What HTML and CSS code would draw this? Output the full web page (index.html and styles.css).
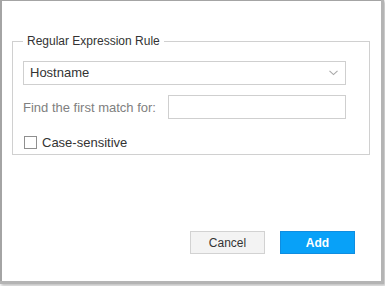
FILE: index.html
```html
<!DOCTYPE html>
<html>
<head>
<meta charset="utf-8">
<link rel="stylesheet" href="styles.css">
</head>
<body>
<div class="dialog">
  <fieldset class="group">
    <legend class="group-title">Regular Expression Rule</legend>
    <div class="select">
      <span class="select-value">Hostname</span>
      <svg class="chevron" width="9" height="6" viewBox="0 0 9 6"><path d="M0.5 0.8 L4.5 4.6 L8.5 0.8" fill="none" stroke="#a8a8a8" stroke-width="1.1"/></svg>
    </div>
    <div class="row">
      <span class="label">Find the first match for:</span>
      <input class="text-input" type="text">
    </div>
    <label class="check-row">
      <span class="checkbox"></span>
      <span class="check-label">Case-sensitive</span>
    </label>
  </fieldset>
  <div class="actions">
    <button class="btn btn-cancel">Cancel</button>
    <button class="btn btn-add">Add</button>
  </div>
</div>
</body>
</html>
```

FILE: styles.css
```css
html, body {
  margin: 0;
  padding: 0;
  background: #fff;
}
body {
  height: 286px;
  overflow: hidden;
  font-family: "Liberation Sans", Arial, sans-serif;
  color: #333;
}
.dialog {
  box-sizing: border-box;
  width: 381px;
  height: 281px;
  background: #fff;
  border-left: 2px solid #a4a4a4;
  border-top: 1px solid #a4a4a4;
  box-shadow: 1px 1px 0 2px #b4b4b4, 3px 3px 3px 2px rgba(0, 0, 0, 0.25);
  padding: 33px 0 0 10px;
}
.group {
  box-sizing: border-box;
  width: 358px;
  margin: 0;
  border: 1px solid #d0d0d0;
  padding: 0 23px 3px 10px;
}
.group-title {
  padding: 0 4px;
  font-size: 12px;
  line-height: 14px;
  color: #333;
}
.select {
  margin-top: 13px;
  box-sizing: border-box;
  height: 24px;
  border: 1px solid #cfcfcf;
  display: flex;
  align-items: center;
  justify-content: space-between;
  padding: 0 7px 0 6px;
}
.select-value {
  font-size: 13px;
  line-height: 22px;
  color: #333;
}
.chevron {
  display: block;
}
.row {
  margin-top: 10px;
  display: flex;
  align-items: center;
  justify-content: space-between;
}
.label {
  font-size: 13px;
  color: #808080;
}
.text-input {
  box-sizing: border-box;
  width: 178px;
  height: 24px;
  margin: 0;
  border: 1px solid #cfcfcf;
  padding: 0 6px;
  font: 13px "Liberation Sans", Arial, sans-serif;
  outline: none;
}
.check-row {
  margin-top: 15px;
  height: 17px;
  display: flex;
  align-items: center;
  gap: 5px;
}
.checkbox {
  box-sizing: border-box;
  width: 13px;
  height: 13px;
  margin-left: 1px;
  border: 1px solid #8f8f8f;
  background: #fff;
}
.check-label {
  font-size: 13px;
  color: #333;
}
.actions {
  margin-top: 76px;
  display: flex;
  justify-content: flex-end;
  gap: 15px;
  padding-right: 26px;
}
.btn {
  box-sizing: border-box;
  width: 75px;
  height: 23px;
  margin: 0;
  padding: 0;
  font: 12px "Liberation Sans", Arial, sans-serif;
  cursor: pointer;
}
.btn-cancel {
  background: #f3f3f3;
  border: 1px solid #d2d2d2;
  color: #333;
}
.btn-add {
  background: #08a1f8;
  border: 1px solid #0f8de0;
  color: #fff;
  font-weight: bold;
}
```
